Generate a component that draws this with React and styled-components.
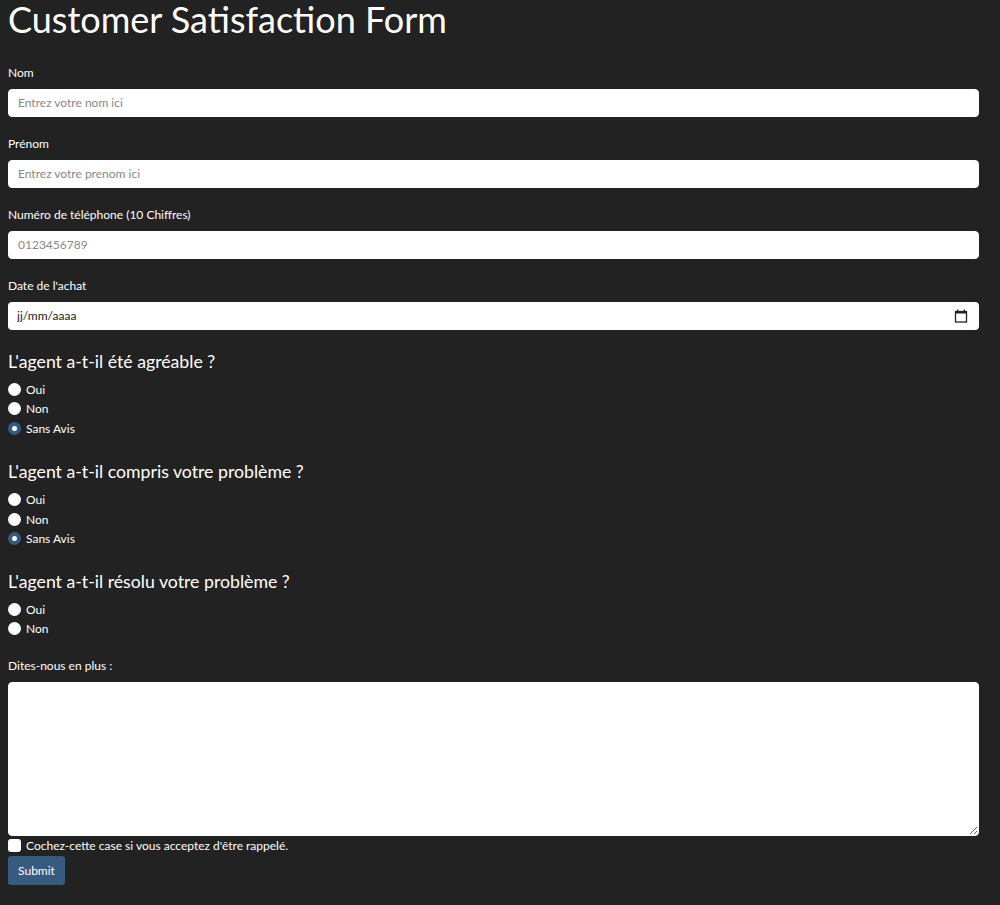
import React from "react"
import styled, { createGlobalStyle } from "styled-components"

const GlobalStyle = createGlobalStyle`
  html, body {
    margin: 0;
    padding: 0;
    background-color: #222222;
  }
  body {
    font-family: Lato, "Open Sans", sans-serif;
    color: #ffffff;
  }
`

const Page = styled.div`
  padding: 0 21px 20px 8px;
`
const Title = styled.h1`
  font-size: 36px;
  font-weight: 400;
  line-height: 1.1;
  margin: 0 0 25px;
`
const Form = styled.form`
  display: flex;
  flex-direction: column;
`
const Field = styled.div`
  display: flex;
  flex-direction: column;
  margin-bottom: ${p => p.gap ?? 19}px;
`
const Label = styled.label`
  font-size: 12px;
  line-height: 16px;
  margin-bottom: 8px;
`
const Input = styled.input`
  box-sizing: border-box;
  height: 28px;
  width: 100%;
  border: 1px solid #ffffff;
  border-radius: 4px;
  padding: 0 9px;
  font-family: inherit;
  font-size: 12px;
  color: #222222;
  background: #ffffff;
  outline: none;
  &::placeholder {
    color: #888888;
  }
`
const DateBox = styled.div`
  box-sizing: border-box;
  height: 28px;
  display: flex;
  align-items: center;
  border-radius: 4px;
  background: #ffffff;
  padding: 0 11px 0 9px;
`
const DateInput = styled.input`
  flex: 1;
  border: none;
  outline: none;
  padding: 0;
  font-family: inherit;
  font-size: 12px;
  color: #222222;
  background: transparent;
  &::placeholder {
    color: #222222;
  }
`
const Question = styled.fieldset`
  border: none;
  margin: 0 0 ${p => p.gap ?? 22}px;
  padding: 0;
`
const QuestionTitle = styled.legend`
  padding: 0;
  font-size: 17.7px;
  line-height: 22px;
  margin-bottom: 7px;
`
const Option = styled.label`
  display: flex;
  align-items: center;
  gap: 5px;
  height: 19.5px;
  font-size: 12px;
`
const Radio = styled.input`
  appearance: none;
  box-sizing: border-box;
  width: 13px;
  height: 13px;
  margin: 0;
  border-radius: 50%;
  background: #ffffff;
  &:checked {
    border: 4px solid #375a7f;
  }
`
const TextArea = styled.textarea`
  box-sizing: border-box;
  display: block;
  width: 100%;
  height: 154px;
  border: 1px solid #ffffff;
  border-radius: 4px;
  background: #ffffff;
  outline: none;
  font-family: inherit;
  font-size: 12px;
  padding: 6px 9px;
`
const CheckRow = styled.label`
  display: flex;
  align-items: center;
  gap: 5px;
  font-size: 12px;
  height: 19px;
`
const CheckBox = styled.input`
  appearance: none;
  width: 13px;
  height: 13px;
  margin: 0;
  border-radius: 3px;
  background: #ffffff;
`
const SubmitButton = styled.button`
  align-self: flex-start;
  height: 29px;
  width: 57px;
  margin-top: 1px;
  border: none;
  border-radius: 3px;
  background-color: #375a7f;
  color: #ffffff;
  font-family: inherit;
  font-size: 12px;
  padding: 0;
`

const CalendarIcon = () => (
  <svg width="14" height="14" viewBox="0 0 14 14">
    <rect x="1.5" y="2.5" width="11" height="10.5" fill="none" stroke="#222" strokeWidth="1.3" />
    <rect x="1" y="2" width="12" height="2.5" fill="#222" />
    <rect x="3" y="0.5" width="1.4" height="2" fill="#222" />
    <rect x="9.6" y="0.5" width="1.4" height="2" fill="#222" />
  </svg>
)

const questions = [
  { name: "agreable", title: "L'agent a-t-il été agréable ?", options: ["Oui", "Non", "Sans Avis"], gap: 23 },
  { name: "compris", title: "L'agent a-t-il compris votre problème ?", options: ["Oui", "Non", "Sans Avis"], gap: 22 },
  { name: "resolu", title: "L'agent a-t-il résolu votre problème ?", options: ["Oui", "Non"], gap: 19 },
]

export default function App() {
  return (
    <Page>
      <GlobalStyle />
      <Title>Customer Satisfaction Form</Title>
      <Form onSubmit={e => e.preventDefault()}>
        <Field>
          <Label htmlFor="nom">Nom</Label>
          <Input id="nom" placeholder="Entrez votre nom ici" />
        </Field>
        <Field>
          <Label htmlFor="prenom">Prénom</Label>
          <Input id="prenom" placeholder="Entrez votre prenom ici" />
        </Field>
        <Field>
          <Label htmlFor="tel">Numéro de téléphone (10 Chiffres)</Label>
          <Input id="tel" placeholder="0123456789" />
        </Field>
        <Field gap={21}>
          <Label htmlFor="date">Date de l'achat</Label>
          <DateBox>
            <DateInput id="date" placeholder="jj/mm/aaaa" />
            <CalendarIcon />
          </DateBox>
        </Field>
        {questions.map(q => (
          <Question key={q.name} gap={q.gap}>
            <QuestionTitle>{q.title}</QuestionTitle>
            {q.options.map(opt => (
              <Option key={opt}>
                <Radio
                  type="radio"
                  name={q.name}
                  defaultChecked={opt === "Sans Avis"}
                />
                {opt}
              </Option>
            ))}
          </Question>
        ))}
        <Field gap={0}>
          <Label htmlFor="plus">Dites-nous en plus :</Label>
          <TextArea id="plus" />
        </Field>
        <CheckRow>
          <CheckBox type="checkbox" />
          Cochez-cette case si vous acceptez d'être rappelé.
        </CheckRow>
        <SubmitButton type="submit">Submit</SubmitButton>
      </Form>
    </Page>
  )
}
